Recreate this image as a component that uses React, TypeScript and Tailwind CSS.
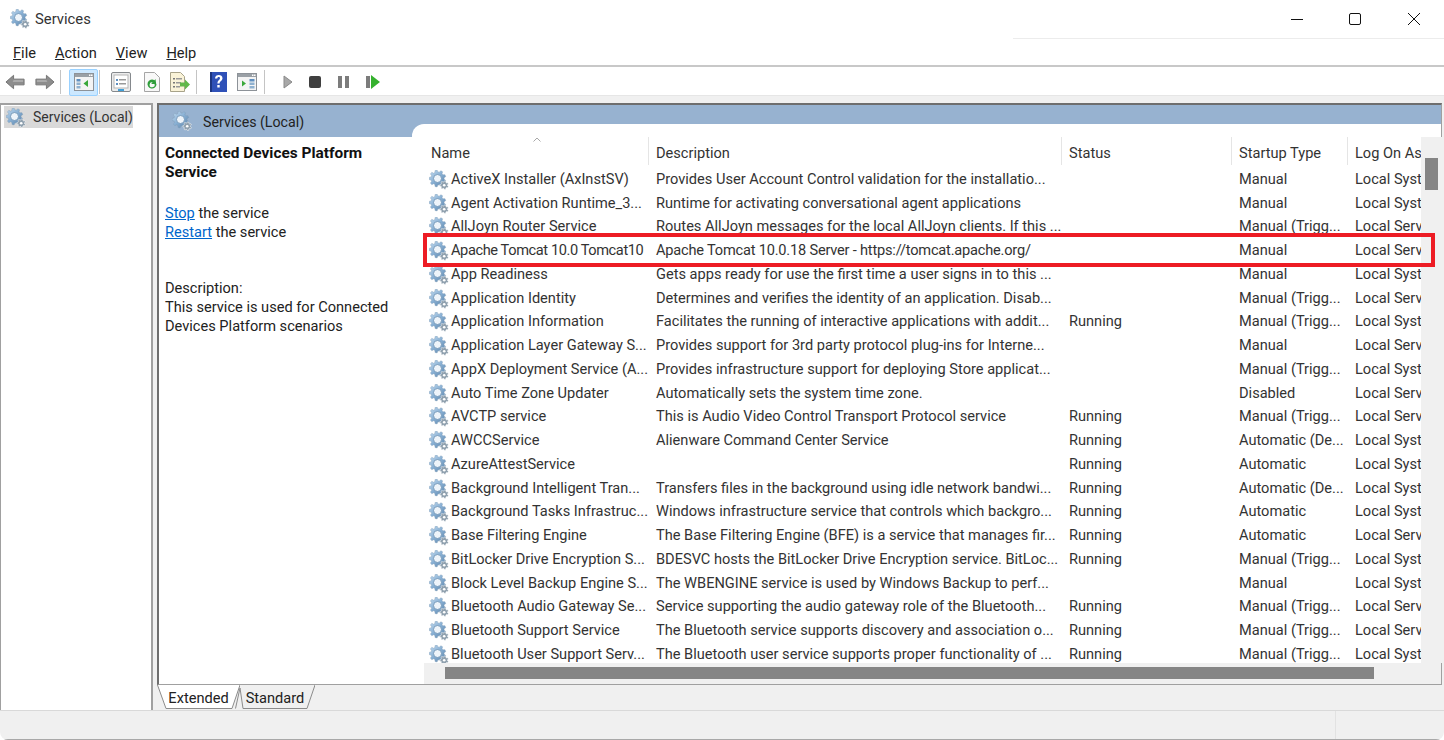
import { useId } from "react";

const ROWS = [
  ["ActiveX Installer (AxInstSV)", "Provides User Account Control validation for the installatio...", "", "Manual", "Local Syste"],
  ["Agent Activation Runtime_3...", "Runtime for activating conversational agent applications", "", "Manual", "Local Syste"],
  ["AllJoyn Router Service", "Routes AllJoyn messages for the local AllJoyn clients. If this ...", "", "Manual (Trigg...", "Local Serv"],
  ["Apache Tomcat 10.0 Tomcat10", "Apache Tomcat 10.0.18 Server - https://tomcat.apache.org/", "", "Manual", "Local Serv"],
  ["App Readiness", "Gets apps ready for use the first time a user signs in to this ...", "", "Manual", "Local Syste"],
  ["Application Identity", "Determines and verifies the identity of an application. Disab...", "", "Manual (Trigg...", "Local Serv"],
  ["Application Information", "Facilitates the running of interactive applications with addit...", "Running", "Manual (Trigg...", "Local Syste"],
  ["Application Layer Gateway S...", "Provides support for 3rd party protocol plug-ins for Interne...", "", "Manual", "Local Serv"],
  ["AppX Deployment Service (A...", "Provides infrastructure support for deploying Store applicat...", "", "Manual (Trigg...", "Local Syste"],
  ["Auto Time Zone Updater", "Automatically sets the system time zone.", "", "Disabled", "Local Serv"],
  ["AVCTP service", "This is Audio Video Control Transport Protocol service", "Running", "Manual (Trigg...", "Local Serv"],
  ["AWCCService", "Alienware Command Center Service", "Running", "Automatic (De...", "Local Syste"],
  ["AzureAttestService", "", "Running", "Automatic", "Local Syste"],
  ["Background Intelligent Tran...", "Transfers files in the background using idle network bandwi...", "Running", "Automatic (De...", "Local Syste"],
  ["Background Tasks Infrastruc...", "Windows infrastructure service that controls which backgro...", "Running", "Automatic", "Local Syste"],
  ["Base Filtering Engine", "The Base Filtering Engine (BFE) is a service that manages fir...", "Running", "Automatic", "Local Serv"],
  ["BitLocker Drive Encryption S...", "BDESVC hosts the BitLocker Drive Encryption service. BitLoc...", "Running", "Manual (Trigg...", "Local Syste"],
  ["Block Level Backup Engine S...", "The WBENGINE service is used by Windows Backup to perf...", "", "Manual", "Local Syste"],
  ["Bluetooth Audio Gateway Se...", "Service supporting the audio gateway role of the Bluetooth...", "Running", "Manual (Trigg...", "Local Serv"],
  ["Bluetooth Support Service", "The Bluetooth service supports discovery and association o...", "Running", "Manual (Trigg...", "Local Serv"],
  ["Bluetooth User Support Serv...", "The Bluetooth user service supports proper functionality of ...", "Running", "Manual (Trigg...", "Local Syste"],
];

function gearPath(cx: number, cy: number, outer: number, inner: number, teeth: number) {
  const pts: string[] = [];
  const step = (Math.PI * 2) / teeth;
  for (let i = 0; i < teeth; i++) {
    const a = i * step + step / 2;
    const corners: [number, number][] = [
      [inner, a - step * 0.34],
      [outer, a - step * 0.18],
      [outer, a + step * 0.18],
      [inner, a + step * 0.34],
    ];
    corners.forEach(([r, t]) => {
      pts.push(`${(cx + r * Math.cos(t)).toFixed(2)} ${(cy + r * Math.sin(t)).toFixed(2)}`);
    });
  }
  return "M" + pts.join("L") + "Z";
}

function GearIcon({ size = 20, className = "" }: { size?: number; className?: string }) {
  const id = useId();
  return (
    <svg width={size} height={size} viewBox="0 0 20 20" className={className}>
      <defs>
        <linearGradient id={id} x1="0" y1="0" x2="1" y2="1">
          <stop offset="0" stopColor="#c4dcf0" />
          <stop offset="0.5" stopColor="#86aed3" />
          <stop offset="1" stopColor="#5b82a6" />
        </linearGradient>
      </defs>
      <path d={gearPath(8.5, 8.5, 8.4, 6.6, 9)} fill={`url(#${id})`} stroke="#7d9ab4" strokeWidth="0.4" />
      <circle cx="8.5" cy="8.5" r="4" fill="#eef4fa" stroke="#6f94b6" strokeWidth="0.9" />
      <path d={gearPath(15.2, 15.2, 4.4, 3.3, 7)} fill="#8fa0ae" stroke="#fff" strokeWidth="0.5" />
      <circle cx="15.2" cy="15.2" r="1.3" fill="#fff" />
    </svg>
  );
}

function ToolSep() {
  return <div className="w-px h-[24px] bg-[#c4c4c4]" />;
}

function ArrowIcon({ flip }: { flip?: boolean }) {
  return (
    <svg width="21" height="18" viewBox="0 0 22 18" className={flip ? "-scale-x-100" : ""}>
      <path d="M1 9 9 2v4h11v6H9v4Z" fill="#8d8d8d" stroke="#747474" strokeWidth="1" strokeLinejoin="round" />
      <path d="M9 7h10v2H8Z" fill="#ababab" />
    </svg>
  );
}

function WindowIcon({ rightList }: { rightList?: boolean }) {
  return (
    <svg width="20" height="18" viewBox="0 0 20 18">
      <rect x="0.5" y="0.5" width="19" height="17" fill="#f4f4f4" stroke="#8d9298" />
      <rect x="1" y="1" width="18" height="3" fill="#9aa0a6" />
      <rect x="15" y="1.5" width="1.5" height="1.5" fill="#fff" />
      <rect x="17" y="1.5" width="1.5" height="1.5" fill="#fff" />
      {rightList ? (
        <>
          <path d="M5 7.5v6l4-3Z" fill="#3aa83a" />
          <rect x="12.5" y="6" width="5" height="2.5" fill="#5f8fc0" />
          <rect x="12.5" y="9.5" width="5" height="2.5" fill="#8fb1d0" />
          <rect x="12.5" y="13" width="5" height="2.5" fill="#8fb1d0" />
        </>
      ) : (
        <>
          <rect x="2.5" y="6" width="4" height="2.5" fill="#5f8fc0" />
          <rect x="2.5" y="9.5" width="4" height="2.5" fill="#8fb1d0" />
          <rect x="2.5" y="13" width="4" height="2.5" fill="#8fb1d0" />
          <path d="M14 7v7l-4.500-3.500Z" fill="#3aa83a" />
        </>
      )}
    </svg>
  );
}

function Toolbar() {
  return (
    <div className="h-[29px] flex items-center bg-white border-b border-[#e6e6e6] pl-[5px] pt-[2px]">
      <ArrowIcon />
      <div className="w-[8px]" />
      <ArrowIcon flip />
      <div className="w-[5px]" />
      <ToolSep />
      <div className="w-[8px]" />
      <div className="w-[29px] h-[27px] flex items-center justify-center bg-[#cce8ff] border border-[#99d1ff] rounded-[2px]">
        <WindowIcon />
      </div>
      <div className="w-[1px]" />
      <ToolSep />
      <div className="w-[11px]" />
      <svg width="20" height="20" viewBox="0 0 20 20">
        <rect x="0.5" y="0.5" width="19" height="19" rx="1.5" fill="#ececec" stroke="#85898d" />
        <rect x="3" y="3" width="14" height="13" fill="#fff" stroke="#b5b5b5" />
        <rect x="5" y="7" width="2" height="2" fill="#5f8fc0" />
        <rect x="8" y="7" width="7" height="1.5" fill="#9a9a9a" />
        <rect x="5" y="11" width="2" height="2" fill="#5f8fc0" />
        <rect x="8" y="11" width="7" height="1.5" fill="#9a9a9a" />
        <rect x="7" y="17" width="6" height="2" fill="#3f9fd8" />
      </svg>
      <div className="w-[13px]" />
      <svg width="16" height="20" viewBox="0 0 16 20">
        <path d="M.5.5h10l5 5v14H.5Z" fill="#f8f8f8" stroke="#a5a5a5" />
        <path d="M12.500 12a4.500 4.500 0 1 1-2-3.700l1-1.300.7 5h-5l1.400-1.700A2.500 2.500 0 1 0 10.500 12Z" fill="#2f9e3b" />
      </svg>
      <div className="w-[10px]" />
      <svg width="20" height="20" viewBox="0 0 20 20">
        <path d="M.5.5h10l4 4v15H.5Z" fill="#faf3d8" stroke="#a8a38a" />
        <rect x="3" y="6" width="2" height="1.5" fill="#777" />
        <rect x="6" y="6" width="6" height="1.5" fill="#999" />
        <rect x="3" y="10" width="2" height="1.5" fill="#777" />
        <rect x="6" y="10" width="5" height="1.5" fill="#999" />
        <rect x="3" y="14" width="2" height="1.5" fill="#777" />
        <rect x="6" y="14" width="4" height="1.5" fill="#999" />
        <path d="M10 10.500h5V7.500l5 5-5 5v-3h-5Z" fill="#62b84a" />
      </svg>
      <div className="w-[6px]" />
      <ToolSep />
      <div className="w-[13px]" />
      <svg width="17" height="20" viewBox="0 0 17 20">
        <rect width="17" height="20" fill="#2f51b8" />
        <rect x="0" y="0" width="2" height="20" fill="#1d357f" />
        <path d="M5 6.500C5 4 6.800 3 8.800 3s3.700 1.100 3.700 3.200c0 2.600-2.900 2.800-2.900 5.300H7.400C7.400 8.300 10 8 10 6.200 10 5.400 9.500 5 8.700 5S7.300 5.500 7.300 6.500ZM7.300 13h2.400v2.500H7.300Z" fill="#fff" />
      </svg>
      <div className="w-[10px]" />
      <WindowIcon rightList />
      <div className="w-[7px]" />
      <ToolSep />
      <div className="w-[18px]" />
      <svg width="10" height="14" viewBox="0 0 10 14">
        <path d="M1 1l8 6-8 6Z" fill="#a8a8a8" stroke="#8a8a8a" />
      </svg>
      <div className="w-[16px]" />
      <div className="w-[12px] h-[12px] rounded-[2px] bg-[#3f3f3f]" />
      <div className="w-[17px]" />
      <div className="flex gap-[3px]">
        <div className="w-[4px] h-[12px] bg-[#7c7c7c]" />
        <div className="w-[4px] h-[12px] bg-[#7c7c7c]" />
      </div>
      <div className="w-[17px]" />
      <div className="w-[4px] h-[12px] bg-[#7c7c7c]" />
      <div className="w-[1px]" />
      <svg width="9" height="14" viewBox="0 0 9 14">
        <path d="M0 0l9 7-9 7Z" fill="#35b12e" />
      </svg>
    </div>
  );
}

function HeaderCell({ w, label, line = true }: { w: string; label: string; line?: boolean }) {
  return (
    <div className={`${w} shrink-0 pl-[7px] h-full flex items-end ${line ? "border-r border-[#e5e5e5]" : ""} whitespace-nowrap overflow-hidden`}>
      {label}
    </div>
  );
}

function ExtendedTab() {
  return (
    <div className="w-[83px] relative h-[25px] flex items-center justify-center pt-[3px]">
      <svg className="absolute inset-0" width="83" height="25" viewBox="0 0 83 25">
        <path d="M0.500 0 9 23.500H75L83 0" fill="#fff" stroke="#8b8b8b" strokeWidth="1" />
      </svg>
      <span className="relative">Extended</span>
    </div>
  );
}

function StandardTab() {
  return (
    <div className="w-[80px] relative h-[25px] flex items-center justify-center pt-[3px]">
      <svg className="absolute inset-0" width="80" height="25" viewBox="0 0 80 25">
        <path d="M0.500 23.500 5 3 8 23.500H72L80 0" fill="none" stroke="#8b8b8b" strokeWidth="1" />
      </svg>
      <span className="relative">Standard</span>
    </div>
  );
}

export default function App() {
  return (
    <div
      className="w-[1444px] h-[740px] flex flex-col overflow-hidden relative bg-white rounded-lg text-[#222] text-[14.6px]"
      style={{ fontFamily: 'Roboto, "Open Sans", sans-serif' }}
    >
      {/* title bar */}
      <div className="h-[38px] flex items-center bg-white">
        <GearIcon size={20} className="ml-[10px]" />
        <span className="ml-[5px] text-[#333] text-[14.8px]">Services</span>
        <div className="ml-auto flex items-center">
          <svg width="14" height="14" viewBox="0 0 14 14" className="mr-[44px]">
            <path d="M1 7.500h12" stroke="#111" strokeWidth="1" />
          </svg>
          <svg width="14" height="14" viewBox="0 0 14 14" className="mr-[45px]">
            <rect x="1.500" y="1.500" width="11" height="11" rx="1.500" fill="none" stroke="#111" strokeWidth="1" />
          </svg>
          <svg width="14" height="14" viewBox="0 0 14 14" className="mr-[23px]">
            <path d="M1 1l12 12M13 1 1 13" stroke="#111" strokeWidth="1" />
          </svg>
        </div>
      </div>

      {/* menu */}
      <div className="h-[29px] flex items-center bg-white border-t border-b-2 border-t-white border-b-[#c8c8c8] relative text-[#222] pt-[3px]">
        <div className="absolute right-0 top-[-1px] w-[431px] h-px bg-[#ececec]" />
        <div className="flex pl-[13px] gap-[19px]">
          <span><u>F</u>ile</span>
          <span><u>A</u>ction</span>
          <span><u>V</u>iew</span>
          <span><u>H</u>elp</span>
        </div>
      </div>

      <Toolbar />

      {/* main */}
      <div className="flex-1 min-h-0 flex bg-[#f0f0f0] pt-[7px]">
        {/* tree */}
        <div className="w-[153px] shrink-0 bg-white border-r-2 border-t-2 border-l border-[#a0a0a0] pt-[1px] pl-[3px]">
          <div className="w-[129px] h-[22px] flex items-center bg-[#d9d9d9] text-[#333] whitespace-nowrap text-[14px] pt-[1px]">
            <GearIcon size={20} className="ml-[2px] shrink-0" />
            <span className="ml-[7px]">Services (Local)</span>
          </div>
        </div>

        {/* right panel */}
        <div className="ml-[4px] flex-1 min-w-0 flex flex-col">
          <div className="h-[582px] mr-[2px] border-t-2 border-l-2 border-[#6e6e6e] border-r border-b border-r-[#a0a0a0] border-b-[#a0a0a0] flex flex-col bg-white relative">
            <div className="h-[32px] bg-[#97b2d0] flex items-start pl-[13px] pt-[7px] text-[#222] text-[14.2px]">
              <GearIcon size={20} className="-mt-[1px]" />
              <span className="ml-[11px]">Services (Local)</span>
            </div>
            <div className="flex-1 min-h-0 flex">
              {/* description */}
              <div className="w-[253px] shrink-0 pl-[6px] pr-[15px] leading-[19px]">
                <div className="font-bold text-[#111] text-[15.4px] mt-[7px]">Connected Devices Platform Service</div>
                <div className="mt-[22px]">
                  <span className="text-[#0066cc] underline">Stop</span> the service
                </div>
                <div>
                  <span className="text-[#0066cc] underline">Restart</span> the service
                </div>
                <div className="mt-[37px]">Description:</div>
                <div>This service is used for Connected Devices Platform scenarios</div>
              </div>

              {/* list */}
              <div className="flex-1 min-w-0 bg-white rounded-tl-[12px] -mt-[13px] pt-[13px] flex flex-col relative">
                <div className="flex-1 min-h-0 flex">
                  <div className="w-[1009px] shrink-0 flex flex-col overflow-hidden pl-[12px]">
                    <div className="h-[28px] flex relative text-[#333] shrink-0">
                      <svg width="8" height="5" viewBox="0 0 8 5" className="absolute left-[109px] top-[0px]">
                        <path d="M.5 4.500 4 1l3.500 3.500" fill="none" stroke="#a8a8a8" />
                      </svg>
                      <HeaderCell w="w-[225px]" label="Name" />
                      <HeaderCell w="w-[413px]" label="Description" />
                      <HeaderCell w="w-[170px]" label="Status" />
                      <HeaderCell w="w-[116px]" label="Startup Type" />
                      <HeaderCell w="w-[73px]" label="Log On As" line={false} />
                    </div>
                    <div className="flex flex-col pt-[3px]">
                      {ROWS.map((r, i) => (
                        <div key={r[0]} className="h-[23.75px] shrink-0 flex items-center whitespace-nowrap text-[#333]">
                          <div className="w-[225px] shrink-0 flex items-center overflow-hidden pl-[5px]">
                            <GearIcon size={20} className="shrink-0" />
                            <span className={`ml-[2px] ${i === 3 ? "tracking-[-0.4px]" : ""}`}>{r[0]}</span>
                          </div>
                          <div className={`w-[413px] shrink-0 pl-[7px] overflow-hidden ${i === 3 ? "tracking-[-0.2px]" : ""}`}>{r[1]}</div>
                          <div className="w-[170px] shrink-0 pl-[7px]">{r[2]}</div>
                          <div className="w-[116px] shrink-0 pl-[7px]">{r[3]}</div>
                          <div className="w-[73px] shrink-0 pl-[7px] overflow-hidden">{r[4]}</div>
                        </div>
                      ))}
                    </div>
                  </div>
                  {/* vertical scrollbar */}
                  <div className="w-[21px] shrink-0 bg-[#f0f0f0] pt-[21px] pl-[4px]">
                    <div className="w-[13px] h-[32px] bg-[#858585]" />
                  </div>
                </div>
                {/* horizontal scrollbar */}
                <div className="h-[21px] shrink-0 flex">
                  <div className="w-[12px] bg-white" />
                  <div className="flex-1 bg-[#f0f0f0] pl-[21px] pt-[4px]">
                    <div className="w-[929px] h-[12px] bg-[#858585]" />
                  </div>
                </div>
              </div>
            </div>
          </div>
          {/* tabs */}
          <div className="flex">
            <ExtendedTab />
            <div className="-ml-[5px]">
              <StandardTab />
            </div>
          </div>
        </div>
      </div>

      {/* status bar */}
      <div className="h-[30px] shrink-0 bg-[#f0f0f0] border-t border-[#d9d9d9] border-b border-b-[#a8a8a8] flex justify-end">
        <div className="w-[109px] border-l border-[#e2e2e2]" />
      </div>

      {/* highlight annotation */}
      <div className="absolute left-[423px] top-[233px] w-[1012px] h-[34px] border-[4px] border-[#ed1c24]" />
    </div>
  );
}
